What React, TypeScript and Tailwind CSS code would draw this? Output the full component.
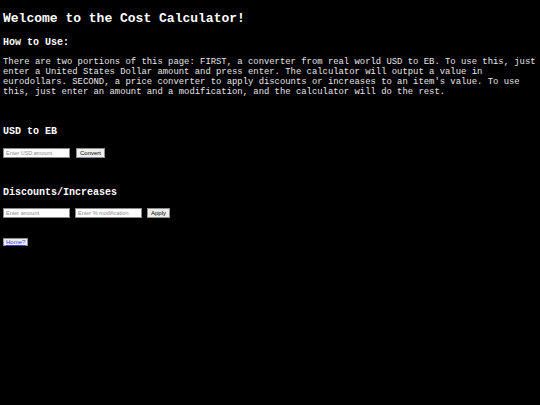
// Cost Calculator page – small retro monospace layout

const mono = { fontFamily: '"Liberation Mono", "Courier New", monospace' };

function SmallInput({ placeholder, width = "w-[67px]" }: { placeholder: string; width?: string }) {
  return (
    <input
      type="text"
      placeholder={placeholder}
      className={`${width} h-[10px] box-border bg-white border border-[#8a8a8a] px-[2px] text-[5.5px] leading-none text-black placeholder:text-[#8c8c8c] font-['Liberation_Sans',Arial,sans-serif] outline-none`}
    />
  );
}

function SmallButton({ children }: { children: React.ReactNode }) {
  return (
    <button className="h-[10px] box-border bg-[#efefef] border border-[#8f8f8f] px-[3px] text-[6px] leading-none text-black font-['Liberation_Sans',Arial,sans-serif]">
      {children}
    </button>
  );
}

export default function App() {
  return (
    <div className="w-[540px] h-[405px] bg-black text-white overflow-hidden px-[3px] pt-[11px]" style={mono}>
      <h1 className="text-[13px] leading-[15px] font-bold text-white">Welcome to the Cost Calculator!</h1>

      <h2 className="mt-[11px] text-[10px] leading-[12px] font-bold">How to Use:</h2>
      <p className="mt-[8px] text-[8.9px] leading-[10px] text-[#e6e6e6]">
        There are two portions of this page: FIRST, a converter from real world USD to EB. To use this, just
        enter a United States Dollar amount and press enter. The calculator will output a value in
        eurodollars. SECOND, a price converter to apply discounts or increases to an item's value. To use
        this, just enter an amount and a modification, and the calculator will do the rest.
      </p>

      <h2 className="mt-[29px] text-[10px] leading-[12px] font-bold">USD to EB</h2>
      <div className="mt-[10px] flex items-center gap-[6px]">
        <SmallInput placeholder="Enter USD amount" />
        <SmallButton>Convert</SmallButton>
      </div>

      <h2 className="mt-[29px] text-[10px] leading-[12px] font-bold">Discounts/Increases</h2>
      <div className="mt-[9px] flex items-center gap-[5px]">
        <SmallInput placeholder="Enter amount" />
        <SmallInput placeholder="Enter % modification" />
        <SmallButton>Apply</SmallButton>
      </div>

      <div className="mt-[20px] flex">
        <button className="h-[8px] box-border bg-[#efefef] border border-[#8f8f8f] px-[2px] text-[6px] leading-none font-['Liberation_Sans',Arial,sans-serif]">
          <a href="#" className="text-[#3b3bd8] underline">Home?</a>
        </button>
      </div>
    </div>
  );
}
